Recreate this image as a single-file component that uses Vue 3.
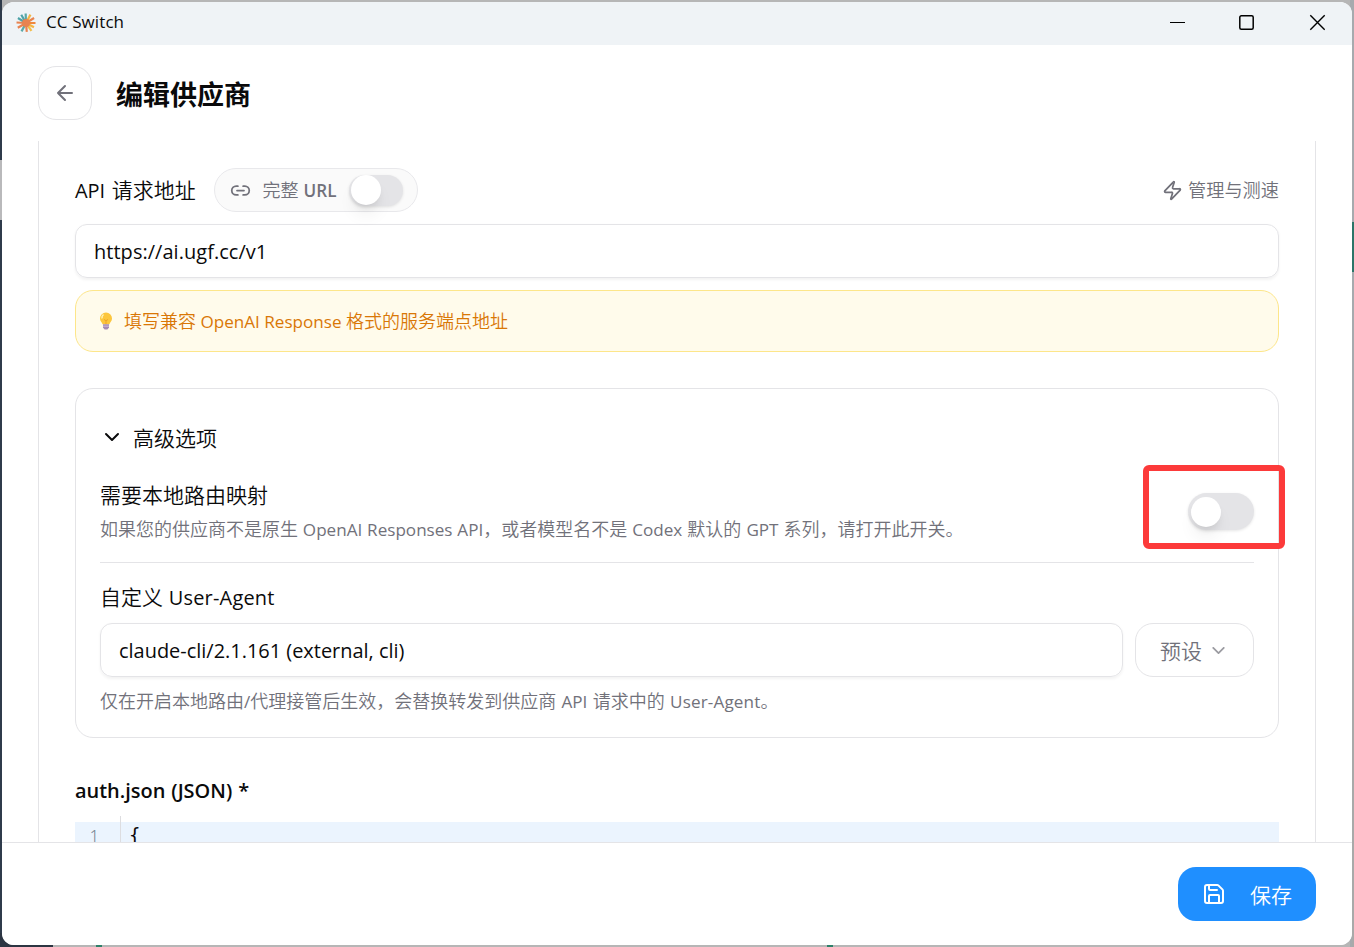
<script setup>
const rays = [
  { a: 0, c: '#f0883e', l: 9.5 },
  { a: 28, c: '#f5b544', l: 9 },
  { a: 55, c: '#f3bd4a', l: 9.5 },
  { a: 85, c: '#e8834f', l: 9 },
  { a: 118, c: '#5aa9a8', l: 9.5 },
  { a: 150, c: '#e8834f', l: 9.5 },
  { a: 183, c: '#e8834f', l: 9.5 },
  { a: 212, c: '#4fa3a8', l: 9.5 },
  { a: 240, c: '#4fa3a8', l: 9.5 },
  { a: 268, c: '#5aa9a8', l: 9.5 },
  { a: 298, c: '#f5b544', l: 9.5 },
  { a: 328, c: '#e8834f', l: 9.5 },
].map((r) => ({
  ...r,
  x: 10 + r.l * Math.cos((r.a * Math.PI) / 180),
  y: 10 + r.l * Math.sin((r.a * Math.PI) / 180),
}))
</script>

<template>
  <div class="desktop">
    <i class="bit left-light"></i><i class="bit right-mid"></i><i class="bit right-teal"></i>
    <i class="bit bottom-dark"></i><i class="bit teal-a"></i><i class="bit teal-b"></i>
    <div class="window">
      <header class="titlebar">
        <svg class="logo" viewBox="0 0 20 20" width="20" height="20">
          <line v-for="r in rays" :key="r.a" x1="10" y1="10" :x2="r.x" :y2="r.y" :stroke="r.c" stroke-width="2.2" />
          <circle cx="10" cy="10" r="4" fill="#e8834f" />
        </svg>
        <span class="app-name">CC Switch</span>
        <svg class="controls" width="160" height="20" viewBox="0 0 160 20" fill="none" stroke="#000">
          <path d="M0 9.5h15" stroke-width="1" />
          <rect x="69.8" y="2.8" width="13.4" height="13.4" rx="1.5" stroke-width="1.5" />
          <path d="M140.300 2.300l14.400 14.400M154.700 2.300l-14.400 14.400" stroke-width="1.4" />
        </svg>
      </header>

      <div class="page-head">
        <button class="back">
          <svg class="ic" width="24" height="24" viewBox="0 0 24 24"><path d="m12 19-7-7 7-7M19 12H5" /></svg>
        </button>
        <h1>编辑供应商</h1>
      </div>

      <main class="viewport">
        <div class="panel">
          <div class="url-row">
            <span class="label"><span class="lat api">API </span>请求地址</span>
            <div class="pill">
              <svg class="ic" width="21" height="21" viewBox="0 0 24 24"><path d="M9 17H7A5 5 0 0 1 7 7h2M15 7h2a5 5 0 1 1 0 10h-2M8 12h8" /></svg>
              <span class="pill-text">完整<span class="lat url"> URL</span></span>
              <span class="switch small"><i></i></span>
            </div>
            <div class="manage">
              <svg class="ic" width="21" height="21" viewBox="0 0 24 24"><path d="M4 14a1 1 0 0 1-.78-1.630l9.900-10.200a.5.5 0 0 1 .86.460l-1.920 6.020A1 1 0 0 0 13 10h7a1 1 0 0 1 .78 1.630l-9.900 10.200a.5.5 0 0 1-.86-.460l1.920-6.020A1 1 0 0 0 11 14z" /></svg>
              <span>管理与测速</span>
            </div>
          </div>

          <div class="field"><span class="lat addr">https://ai.ugf.cc/v1</span></div>

          <div class="notice">
            <svg class="bulb" width="14" height="18" viewBox="0 0 14 18">
              <path d="M7 .5a6 6 0 0 0-6 6c0 2.500 1.800 3.700 2.600 5.800h6.800C11.200 10.200 13 9 13 6.500a6 6 0 0 0-6-6z" fill="#fcc63d" />
              <path d="M4.500 2.500A4 4 0 0 0 3 6.500" stroke="#fff3b8" stroke-width="1.500" fill="none" />
              <path d="M5 7.500l2 1.200 2-1.200M7 8.700v3.500" stroke="#e99b25" fill="none" stroke-width=".8" />
              <path d="M4 12.300h6v3.200l-1.600 2H5.600L4 15.500z" fill="#a58bb5" />
              <path d="M4 14.200h6" stroke="#d9c9e2" stroke-width=".8" />
            </svg>
            <span class="notice-text">填写兼容<span class="lat l-resp"> OpenAI Response </span>格式的服务端点地址</span>
          </div>

          <section class="card">
            <div class="adv">
              <svg class="ic dark" width="24" height="24" viewBox="0 0 24 24"><path d="m6 9 6 6 6-6" /></svg>
              <span>高级选项</span>
            </div>
            <div class="route">
              <div>
                <div class="label">需要本地路由映射</div>
                <div class="desc">如果您的供应商不是原生<span class="lat l-api"> OpenAI Responses API</span>，或者模型名不是<span class="lat l-codex"> Codex </span>默认的<span class="lat l-gpt"> GPT </span>系列，请打开此开关。</div>
              </div>
              <span class="switch"><i></i></span>
              <div class="highlight"></div>
            </div>
            <div class="label ua">自定义<span class="lat l-ua"> User-Agent</span></div>
            <div class="ua-row">
              <div class="field grow"><span class="lat cli">claude-cli/2.1.161 (external, cli)</span></div>
              <button class="preset">预设
                <svg class="ic" width="21" height="21" viewBox="0 0 24 24"><path d="m6 9 6 6 6-6" /></svg>
              </button>
            </div>
            <div class="desc hint">仅在开启本地路由<span class="lat">/</span>代理接管后生效，会替换转发到供应商<span class="lat l-api2"> API </span>请求中的<span class="lat l-ua2"> User-Agent</span>。</div>
          </section>

          <div class="auth"><span class="lat">auth.json (JSON) *</span></div>
          <div class="editor">
            <span class="gutter">1</span>
            <span class="code">{</span>
          </div>
        </div>
      </main>

      <footer>
        <button class="save">
          <svg class="ic" width="24" height="24" viewBox="0 0 24 24"><path d="M15.200 3a2 2 0 0 1 1.400.6l3.800 3.800a2 2 0 0 1 .6 1.400V19a2 2 0 0 1-2 2H5a2 2 0 0 1-2-2V5a2 2 0 0 1 2-2zM17 21v-7a1 1 0 0 0-1-1H8a1 1 0 0 0-1 1v7M7 3v4a1 1 0 0 0 1 1h7" /></svg>
          <span>保存</span>
        </button>
      </footer>
    </div>
  </div>
</template>

<style>
body { margin: 0; overflow: hidden; }
</style>

<style scoped>
* { box-sizing: border-box; }
.desktop {
  position: relative; width: 1354px; height: 947px; padding: 2px; overflow: hidden;
  background: linear-gradient(90deg, #2f3b4b 0 2px, #b6b6b6 2px 1350px, #a6aaae 1350px);
  font-family: "Open Sans", "Noto Sans CJK SC", sans-serif; color: #0a0a0b;
  font-weight: 350;
}
.bit { position: absolute; }
.left-light { left: 0; top: 160px; width: 2px; height: 60px; background: #b9b9bb; }
.right-mid { right: 0; top: 616px; width: 2px; height: 331px; background: #a9a9a9; }
.right-teal { right: 0; top: 222px; width: 2px; height: 50px; background: #2b7568; }
.bottom-dark { left: 0; bottom: 0; width: 53px; height: 14px; background: #2c3542; }
.teal-a, .teal-b { bottom: 0; width: 6px; height: 2px; background: #2f8069; z-index: 1; }
.teal-a { left: 96px; }
.teal-b { left: 827px; }
.window {
  position: relative; width: 1350px; height: 943px; border-radius: 12px; overflow: hidden; background: #fff;
  display: flex; flex-direction: column;
}
.lat { font-size: .95em; font-weight: 400; white-space: pre; }
.api { word-spacing: 1.500px; }
.url { letter-spacing: .1px; word-spacing: .5px; }
.addr { letter-spacing: .06px; }
.l-api { word-spacing: .4px; }
.l-codex, .l-gpt { word-spacing: .6px; }
.l-api2 { word-spacing: .8px; }
.l-ua { letter-spacing: .2px; word-spacing: .4px; }
.l-ua2 { letter-spacing: .15px; word-spacing: .8px; }
.ic { display: block; flex: none; fill: none; stroke: currentColor; stroke-width: 2; stroke-linecap: round; stroke-linejoin: round; }
button { font: inherit; background: #fff; border: 1px solid #e4e4e7; padding: 0; }

.titlebar { height: 43px; flex: none; background: #eff3f6; display: flex; align-items: center; padding: 0 27px 0 14px; }
.logo { margin: -1px 10px 0 0; }
.app-name { font-size: 17px; font-weight: 400; letter-spacing: .1px; line-height: 24px; margin-top: -3px; }
.controls { margin: -2px -5px 0 auto; }

.page-head { height: 96px; flex: none; display: flex; align-items: flex-start; padding: 21px 36px 0; }
.back { width: 54px; height: 54px; border-radius: 18px; display: grid; place-items: center; color: #71717a; }
h1 { margin: 9px 0 0 24px; font-size: 27px; line-height: 40px; font-weight: 700; }

.viewport { height: 701px; flex: none; overflow: hidden; padding: 0 36px; }
.panel { height: 720px; border: solid #e4e4e7; border-width: 0 1px; padding: 27px 36px 0; }
.label { font-size: 21px; line-height: 30px; white-space: nowrap; }
.url-row { display: flex; height: 44px; align-items: center; }
.url-row > .label { width: 139px; padding-top: 1px; }
.pill {
  width: 204px; height: 44px; border: 1px solid #e8e8eb; border-radius: 22px; background: #fafafa;
  display: flex; align-items: center; padding: 0 14px 0 15px; color: #71717a;
}
.pill-text { font-size: 18px; margin-left: 11.500px; white-space: nowrap; padding-bottom: 2px; }
.pill-text .lat { font-weight: 600; }
.pill .switch { margin-left: auto; }
.manage { margin-left: auto; display: flex; align-items: center; gap: 5px; font-size: 18.200px; color: #71717a; white-space: nowrap; }
.manage span { padding-bottom: 2px; }
.switch {
  flex: none; display: flex; align-items: center; width: 66px; height: 37px; padding-left: 3px;
  border-radius: 19px; background: #e4e4e7; box-shadow: 0 1px 3px rgba(0, 0, 0, .1);
}
.switch i { width: 30px; height: 30px; border-radius: 50%; background: #fff; box-shadow: 0 12px 18px -3px rgba(0, 0, 0, .07), 0 5px 8px -4px rgba(0, 0, 0, .12); }
.switch.small { width: 54px; height: 31px; padding-left: 2px; }

.field {
  height: 54px; border: 1px solid #e4e4e7; border-radius: 12px; box-shadow: 0 1.500px 3px rgba(0, 0, 0, .05);
  display: flex; align-items: center; padding: 1px 18px 0; font-size: 21px;
}
.url-row + .field { margin-top: 12px; }
.notice {
  height: 62px; margin-top: 12px; border: 1px solid #fde68a; border-radius: 18px; background: #fffbeb;
  display: flex; align-items: center; padding-left: 23px; font-size: 18px; color: #d97706; white-space: nowrap;
}
.bulb { margin-right: 11px; }
.notice-text { padding-bottom: 2px; }

.card { height: 350px; margin-top: 36px; border: 1px solid #e4e4e7; border-radius: 18px; padding: 32px 24px 0; }
.adv { display: flex; align-items: center; gap: 9px; height: 32px; font-size: 21px; }
.route {
  position: relative; display: flex; justify-content: space-between; height: 110px; padding-top: 27px;
  border-bottom: 1px solid #e4e4e7;
}
.route .switch { margin-top: 13px; }
.desc { font-size: 18px; line-height: 27px; color: #71717a; white-space: nowrap; }
.route .desc { margin-top: 6px; }
.highlight { position: absolute; left: 1043px; top: 12px; width: 142px; height: 84px; border: 6px solid #fc3a3a; border-radius: 6px; }
.ua { margin-top: 19px; }
.ua-row { display: flex; gap: 12px; margin-top: 10px; }
.grow { flex: 1; }
.preset {
  width: 119px; height: 54px; border-radius: 18px; display: flex; align-items: center; justify-content: center;
  gap: 6px; font-size: 21px; color: #71717a;
}
.preset .ic { opacity: .7; }
.hint { margin-top: 11px; }

.auth { margin-top: 37px; height: 30px; line-height: 30px; font-size: 21px; }
.auth .lat { font-weight: 600; word-spacing: .8px; }
.editor {
  margin-top: 11px; height: 40px; display: flex; line-height: 30px;
  background: linear-gradient(#fff 0 6px, #ebf4fe 6px);
  font-family: "Noto Sans", sans-serif;
}
.gutter { width: 46px; border-right: 1px solid #dddde0; padding: 5px 21px 0 0; text-align: right; font-size: 16px; color: #71808c; }
.code { padding: 4px 0 0 8px; font-family: "DejaVu Sans Mono", monospace; font-size: 19px; font-weight: 400; }

footer { flex: 1; border-top: 1px solid #e4e4e7; padding: 24px 36px 0; display: flex; justify-content: flex-end; background: #fff; }
.save {
  width: 138px; height: 54px; border: 0; border-radius: 18px; background: #1f8fff; color: #fff;
  display: flex; align-items: center; padding-left: 24px; gap: 24px; font-size: 21px;
}
</style>
